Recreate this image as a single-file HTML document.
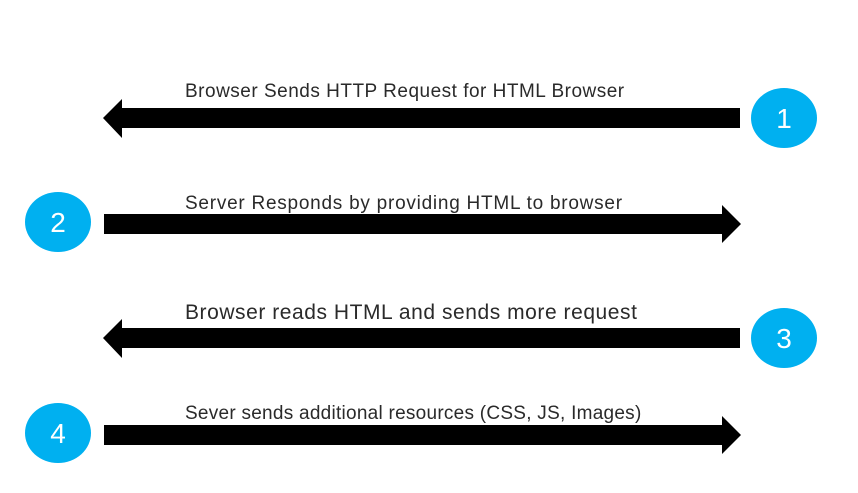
<!DOCTYPE html>
<html><head><style>
body{margin:0;width:858px;height:493px;background:#fff;overflow:hidden;position:relative;font-family:"Liberation Sans",sans-serif;}
.t{position:absolute;color:#2a2a2a;white-space:nowrap;left:185px;}
</style></head><body>
<svg width="858" height="493" style="position:absolute;left:0;top:0">
<g fill="#000">
<polygon points="740,108 122,108 122,99 103,118 122,138 122,128 740,128"/>
<polygon points="104,214 722,214 722,205 741,224 722,243 722,234 104,234"/>
<polygon points="740,328 122,328 122,319 103,338 122,358 122,348 740,348"/>
<polygon points="104,425 722,425 722,416 741,435 722,454 722,445 104,445"/>
</g>
<g fill="#00b0f0">
<ellipse cx="784" cy="118" rx="33" ry="30"/>
<ellipse cx="58" cy="222" rx="33" ry="30"/>
<ellipse cx="784" cy="338" rx="33" ry="30"/>
<ellipse cx="58" cy="433" rx="33" ry="30"/>
</g>
<g fill="#fff" font-family="Liberation Sans, sans-serif" font-size="28" text-anchor="middle">
<text x="784" y="128">1</text>
<text x="58" y="232">2</text>
<text x="784" y="348">3</text>
<text x="58" y="443">4</text>
</g>
</svg>
<div class="t" style="top:81px;font-size:19px;letter-spacing:0.5px">Browser Sends HTTP Request for HTML Browser</div>
<div class="t" style="top:193px;font-size:19px;letter-spacing:0.75px">Server Responds by providing HTML to browser</div>
<div class="t" style="top:301px;font-size:21px;letter-spacing:0.55px">Browser reads HTML and sends more request</div>
<div class="t" style="top:403px;font-size:19px;letter-spacing:0.26px">Sever sends additional resources (CSS, JS, Images)</div>
</body></html>
